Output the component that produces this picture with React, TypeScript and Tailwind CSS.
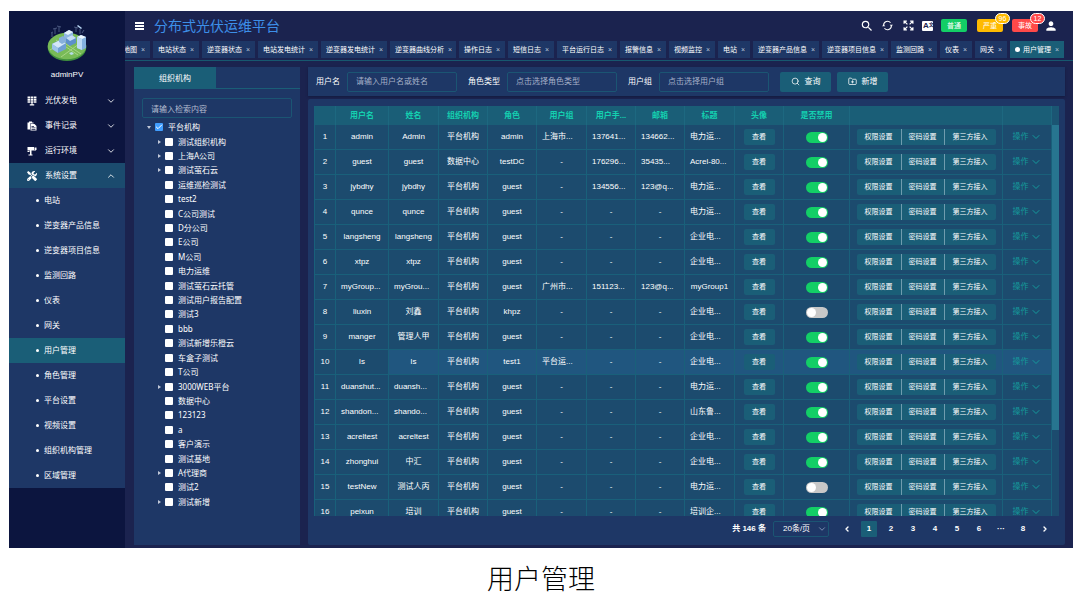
import { Check, ChevronDown, ChevronLeft, ChevronRight, ChevronUp, FolderPlus, Search } from "lucide-react";
import { MdPerson, MdSearch } from "react-icons/md";
import { FaTools } from "react-icons/fa";

const tabs = [
  "地图",
  "电站状态",
  "逆变器状态",
  "电站发电统计",
  "逆变器发电统计",
  "逆变器曲线分析",
  "操作日志",
  "短信日志",
  "平台运行日志",
  "报警信息",
  "视频监控",
  "电站",
  "逆变器产品信息",
  "逆变器项目信息",
  "监测回路",
  "仪表",
  "网关",
  "用户管理",
];

const subMenu = [
  "电站",
  "逆变器产品信息",
  "逆变器项目信息",
  "监测回路",
  "仪表",
  "网关",
  "用户管理",
  "角色管理",
  "平台设置",
  "视频设置",
  "组织机构管理",
  "区域管理",
];

const tree = [
  { name: "测试组织机构", open: true },
  { name: "上海A公司", open: true },
  { name: "测试萤石云", open: true },
  { name: "运维巡检测试" },
  { name: "test2" },
  { name: "C公司测试" },
  { name: "D分公司" },
  { name: "E公司" },
  { name: "M公司" },
  { name: "电力运维" },
  { name: "测试萤石云托管" },
  { name: "测试用户报告配置" },
  { name: "测试3" },
  { name: "bbb" },
  { name: "测试新增乐橙云" },
  { name: "车盒子测试" },
  { name: "T公司" },
  { name: "3000WEB平台", open: true },
  { name: "数据中心" },
  { name: "123123" },
  { name: "a" },
  { name: "客户演示" },
  { name: "测试基地" },
  { name: "A代理商", open: true },
  { name: "测试2" },
  { name: "测试新增", open: true },
];

const columns = ["", "用户名", "姓名", "组织机构", "角色", "用户组", "用户手...", "邮箱", "标题", "头像", "是否禁用", "", ""];

const users = [
  ["admin", "Admin", "平台机构", "admin", "上海市...", "137641...", "134662...", "电力运..."],
  ["guest", "guest", "数据中心", "testDC", "-", "176296...", "35435...", "Acrel-80..."],
  ["jybdhy", "jybdhy", "平台机构", "guest", "-", "134556...", "123@q...", "电力运..."],
  ["qunce", "qunce", "平台机构", "guest", "-", "-", "-", "电力运..."],
  ["langsheng", "langsheng", "平台机构", "guest", "-", "-", "-", "企业电..."],
  ["xtpz", "xtpz", "平台机构", "guest", "-", "-", "-", "企业电..."],
  ["myGroup...", "myGrou...", "平台机构", "guest", "广州市...", "151123...", "123@q...", "myGroup1"],
  ["liuxin", "刘鑫", "平台机构", "khpz", "-", "-", "-", "企业电..."],
  ["manger", "管理人甲", "平台机构", "guest", "-", "-", "-", "企业电..."],
  ["ls", "ls", "平台机构", "test1", "平台运...", "-", "-", "企业电..."],
  ["duanshut...", "duansh...", "平台机构", "guest", "-", "-", "-", "电力运..."],
  ["shandon...", "shando...", "平台机构", "guest", "-", "-", "-", "山东鲁..."],
  ["acreltest", "acreltest", "平台机构", "guest", "-", "-", "-", "企业电..."],
  ["zhonghui", "中汇", "平台机构", "guest", "-", "-", "-", "企业电..."],
  ["testNew", "测试人丙", "平台机构", "guest", "-", "-", "-", "电力运..."],
  ["peixun", "培训", "平台机构", "guest", "-", "-", "-", "培训企..."],
];

const disabledUsers = ["liuxin", "testNew"];

function Logo() {
  return (
    <svg viewBox="0 0 40 38" className="h-[38px] w-10">
      <ellipse cx="20" cy="23.5" rx="19.3" ry="13.5" fill="#3f8f3d" />
      <ellipse cx="20" cy="22" rx="19.3" ry="13.2" fill="#78bb57" />
      <path d="M3 26l13-8 18 12M9 16l22 15M14 33l18-13" stroke="#a9d487" strokeWidth="1" fill="none" />
      <path d="M5 13V9M4 9l2-1M8 10V5M6 5l4-1M12 8V3M10 2l4 1M29 8V3M27 3l4 1M33 10V5M35 9l2-3" stroke="#66769b" strokeWidth="0.7" fill="none" />
      <path d="M31 1l4 3-1 1-4-3z" fill="#b9d8f5" />
      <path d="M5 20l8-4 6 3v6l-8 4-6-4z" fill="#6f9fd4" />
      <path d="M5 20l8-4 6 3-8 5z" fill="#d4e7f9" />
      <path d="M5 20l6 4v5l-6-4z" fill="#9dc4ea" />
      <path d="M17 9l5-3 4 2v5l-5 3-4-2z" fill="#8fb8e2" />
      <path d="M17 9l5-3 4 2-5 3z" fill="#e3f0fc" />
      <path d="M12 14l4-2 3 2v4l-4 2-3-2z" fill="#86b0dc" />
      <path d="M19 14l6-3 4 3v5l-6 3-4-3z" fill="#5d90cb" />
      <path d="M19 14l6-3 4 3-6 3z" fill="#c5def5" />
      <path d="M30 13l4-2 5 2v11l-4 2-5-2z" fill="#84b2e0" />
      <path d="M30 13l4-2 5 2-4 2z" fill="#edf6fe" />
      <path d="M30 13l5 2v11l-5-2z" fill="#bcdaf4" />
      <path d="M22 29l3-1 2 2-3 1z" fill="#b5dcea" />
    </svg>
  );
}

function GridIcon() {
  return (
    <svg viewBox="0 0 18 18" className="h-[10px] w-[10px]" fill="currentColor">
      <path d="M1 1h4.500v3.500H1zM6.500 1h5v3.500h-5zM12.500 1H17v3.500h-4.500zM1 5.500h4.500v3H1zM6.500 5.500h5v3h-5zM12.500 5.500H17v3h-4.500zM1 9.500h4.500V12H1zM6.500 9.500h5V12h-5zM12.500 9.500H17V12h-4.500zM8 12h2v3H8zM5 15h8v2H5z" />
    </svg>
  );
}

function RecordIcon() {
  return (
    <svg viewBox="0 0 20 20" className="h-[10px] w-[10px]" fill="currentColor">
      <path d="M1 3h3V1h6v2h3v2H6v12H1z" />
      <path fillRule="evenodd" d="M7 6h8l4 4v9H7zM9 10v1.500h5V10zM9 13v1.500h8V13zM9 16v1.500h8V16z" />
    </svg>
  );
}

function CameraIcon() {
  return (
    <svg viewBox="0 0 20 20" className="h-[10px] w-[10px]" fill="currentColor">
      <path d="M1 2h13v7H1zM15 3h4v5h-2v2h-2zM6 9h3v8H6zM3 17h8v2H3zM1 10h4v2H1z" />
    </svg>
  );
}

function RefreshIcon() {
  return (
    <svg viewBox="0 0 20 20" className="h-[11px] w-[11px]" fill="none" stroke="currentColor" strokeWidth="2">
      <path d="M3 9a7 7 0 0 1 12.500-4M17 11a7 7 0 0 1-12.500 4" />
      <path d="M14 8.500h6L17 12zM0 11.500h6L3 8z" fill="currentColor" stroke="none" />
    </svg>
  );
}

function ExpandIcon() {
  return (
    <svg viewBox="0 0 20 20" className="h-[11px] w-[11px]" fill="none" stroke="currentColor" strokeWidth="2.200">
      <path d="M2 7V2h5M2 2l6 6M13 2h5v5M18 2l-6 6M2 13v5h5M2 18l6-6M18 13v5h-5M18 18l-6-6" />
    </svg>
  );
}

function Sidebar() {
  const groups = [
    { name: "光伏发电", icon: <GridIcon /> },
    { name: "事件记录", icon: <RecordIcon /> },
    { name: "运行环境", icon: <CameraIcon /> },
  ];
  return (
    <aside className="w-[116px] shrink-0 overflow-hidden bg-[#0c153f]">
      <div className="flex h-[77px] flex-col items-center pt-[13px]">
        <Logo />
        <span className="mt-2 leading-[10px]">adminPV</span>
      </div>
      <nav>
        {groups.map((g) => (
          <button key={g.name} className="flex h-[25px] w-full items-center pr-[9px] pl-[18px]">
            <span className="flex w-[18px] items-center">{g.icon}</span>
            {g.name}
            <ChevronDown className="ml-auto h-[10px] w-[10px]" />
          </button>
        ))}
        <button className="flex h-[25px] w-full items-center bg-[#1b4b6e] pr-[9px] pl-[18px]">
          <span className="flex w-[18px] items-center">
            <FaTools className="h-[10px] w-[10px]" />
          </span>
          系统设置
          <ChevronUp className="ml-auto h-[10px] w-[10px]" />
        </button>
        <ul className="bg-[#1e3766]">
          {subMenu.map((name) => (
            <li key={name}>
              <a
                href="#"
                className={`flex h-[25px] items-center gap-[5px] pl-[27px] ${name === "用户管理" ? "bg-[#1a5e77]" : ""}`}
              >
                <i className="h-[3px] w-[3px] rounded-full bg-white" />
                {name}
              </a>
            </li>
          ))}
        </ul>
      </nav>
    </aside>
  );
}

function Header() {
  return (
    <header className="flex h-[29px] items-center pr-[15px] pl-[10px]">
      <button aria-label="菜单" className="flex w-[9px] flex-col gap-px">
        <i className="h-[2px] bg-white" />
        <i className="h-[2px] bg-white" />
        <i className="h-[2px] bg-white" />
      </button>
      <h1 className="ml-[10px] text-[14px] text-[#3d8fe8]">分布式光伏运维平台</h1>
      <div className="ml-auto flex items-center">
        <button aria-label="搜索" className="mr-[8px]">
          <MdSearch className="h-[14px] w-[14px]" />
        </button>
        <button aria-label="刷新" className="mr-[10px]">
          <RefreshIcon />
        </button>
        <button aria-label="全屏" className="mr-2">
          <ExpandIcon />
        </button>
        <button className="mr-2 flex h-[10px] w-[11px] items-center rounded-[1px] bg-white pl-px text-[8px] leading-none font-bold text-[#1b234f]">
          A<span className="mb-[3px] text-[5px] leading-none">文</span>
        </button>
        <button className="mr-[10px] h-[13px] w-[26px] rounded-[2px] bg-[#13ce66] text-[7px]">普通</button>
        <Alarm label="严重" count={96} tone="bg-[#ffba00]" />
        <Alarm label="事故" count={12} tone="bg-[#ff4949]" />
        <button aria-label="用户" className="-ml-[3px]">
          <MdPerson className="h-[14px] w-[14px]" />
        </button>
      </div>
    </header>
  );
}

function Alarm({ label, count, tone }: { label: string; count: number; tone: string }) {
  return (
    <button className={`relative mr-[9px] h-[13px] w-[26px] rounded-[2px] text-[7px] ${tone}`}>
      {label}
      <span
        className={`absolute -top-[6px] -right-[7px] flex h-[11px] w-[15px] items-center justify-center rounded-full border border-white text-[7px] leading-none ${tone}`}
      >
        {count}
      </span>
    </button>
  );
}

function TabBar() {
  return (
    <div className="flex h-[21px] items-start justify-end gap-[3px] overflow-hidden border-b border-[#17586f] pt-px pr-[9px] text-[7px]">
      {tabs.map((t, i) => (
        <a
          key={i}
          href="#"
          className={`flex h-[17px] shrink-0 items-center pl-[5px] whitespace-nowrap ${t.length > 6 ? "pr-1" : "pr-[5px]"} ${
            t === "用户管理" ? "bg-[#1a5e77]" : "bg-[#1e3766]"
          }`}
        >
          {t === "用户管理" && <i className="mr-[3px] h-[5px] w-[5px] rounded-full bg-white" />}
          {t}
          <span className="ml-1 w-1 text-center text-[#b9c3d6]">×</span>
        </a>
      ))}
    </div>
  );
}

function TreeBox({ name, checked }: { name: string; checked?: boolean }) {
  return (
    <label className="relative flex items-center gap-[5px]">
      <input
        type="checkbox"
        defaultChecked={checked}
        className="peer h-2 w-2 appearance-none rounded-[1px] bg-white checked:bg-[#409eff]"
      />
      <Check className="pointer-events-none absolute left-0 hidden h-2 w-2 peer-checked:block" strokeWidth={3} />
      {name}
    </label>
  );
}

function OrgTree() {
  return (
    <section className="flex w-[166px] shrink-0 flex-col bg-[#1e3766] font-['Noto_Sans','Noto_Sans_CJK_SC',sans-serif]">
      <div className="flex h-[22px] border-b border-[#1a5e77]">
        <button className="w-[82px] bg-[#1a5e77]">组织机构</button>
      </div>
      <input
        aria-label="检索"
        placeholder="请输入检索内容"
        className="mx-2 mt-[9px] h-5 rounded-[2px] border border-[#1b5573] px-2 placeholder:text-[#b4bdd0]"
      />
      <ul className="mt-[2px] mb-9 flex min-h-0 flex-1 flex-col overflow-hidden">
        <li className="flex flex-1 items-center pl-[13px]">
          <span className="flex w-2">
            <i className="border-x-2 border-t-[3px] border-x-transparent border-t-[#c0c8d8]" />
          </span>
          <TreeBox name="平台机构" checked />
        </li>
        {tree.map((n) => (
          <li key={n.name} className="flex flex-1 items-center pl-6">
            <span className="flex w-[7px]">
              {n.open && <i className="border-y-2 border-l-[3px] border-y-transparent border-l-[#c0c8d8]" />}
            </span>
            <TreeBox name={n.name} />
          </li>
        ))}
      </ul>
    </section>
  );
}

function Field({ label, hint }: { label: string; hint: string }) {
  return (
    <label className="mr-[11px] flex items-center gap-[7px]">
      {label}
      <input
        placeholder={hint}
        className="h-5 w-[110px] rounded-[2px] border border-[#1b5573] px-2 placeholder:text-[#a5b0c8]"
      />
    </label>
  );
}

function FilterBar() {
  return (
    <form className="flex h-[29px] items-center bg-[#1e3766] pl-2 shadow-[0_1px_2px_#141b40]">
      <Field label="用户名" hint="请输入用户名或姓名" />
      <Field label="角色类型" hint="点击选择角色类型" />
      <Field label="用户组" hint="点击选择用户组" />
      <button type="button" className="flex h-5 w-[51px] items-center justify-center gap-[5px] rounded-[2px] bg-[#1a5e77]">
        <Search className="h-[9px] w-[9px]" />
        查询
      </button>
      <button type="button" className="ml-[6px] flex h-5 w-[51px] items-center justify-center gap-[5px] rounded-[2px] bg-[#1a5e77]">
        <FolderPlus className="h-[9px] w-[9px]" />
        新增
      </button>
    </form>
  );
}

function UserRow({ row, index }: { row: string[]; index: number }) {
  const active = row[0] === "ls";
  const hover = active ? "bg-[#20567f]" : "";
  const cell = "border-r border-b border-[#19607a] p-0 text-center whitespace-nowrap";
  return (
    <tr className="h-[25px] bg-[#1c4b6e]">
      <td className={cell}>{index + 1}</td>
      {row.map((v, i) => (
        <td key={i} className={`${cell} ${i > 0 ? hover : ""}`}>
          <div className={v.endsWith("...") ? "pl-[5px] text-left" : ""}>{v}</div>
        </td>
      ))}
      <td className={`${cell} ${hover}`}>
        <button className="mx-auto block h-4 w-[31px] rounded-[2px] bg-[#1a5e77] text-[7px]">查看</button>
      </td>
      <td className={`${cell} ${hover}`}>
        <input
          type="checkbox"
          role="switch"
          aria-label={`是否禁用 ${row[0]}`}
          defaultChecked={!disabledUsers.includes(row[0])}
          className="mx-auto flex h-[11px] w-[22px] appearance-none items-center rounded-full bg-[#c8c8c8] px-px before:block before:h-[9px] before:w-[9px] before:rounded-full before:bg-white checked:bg-[#13ce66] checked:before:ml-[11px]"
        />
      </td>
      <td className={`${cell} ${hover}`}>
        <div className="flex justify-center text-[7px]">
          <button className="h-4 rounded-l-[2px] bg-[#1a5e77] px-2">权限设置</button>
          <button className="h-4 border-x border-[#6f9cae] bg-[#1a5e77] px-[7px]">密码设置</button>
          <button className="h-4 rounded-r-[2px] bg-[#1a5e77] px-2">第三方接入</button>
        </div>
      </td>
      <td className={`${cell} ${hover}`}>
        <button className="mx-auto flex items-center gap-px text-[#159a9c]">
          操作
          <ChevronDown className="h-3 w-3" strokeWidth={2} />
        </button>
      </td>
    </tr>
  );
}

function UserTable() {
  return (
    <div className="flex min-h-0 flex-1">
      <div className="min-w-0 flex-1 overflow-hidden border-l border-[#19607a]">
        <table className="w-full table-fixed border-separate border-spacing-0">
          <colgroup>
            <col className="w-[21px]" />
            <col className="w-[53px]" />
            <col className="w-[50px]" />
            <col className="w-[49px]" />
            <col className="w-[49px]" />
            <col className="w-[50px]" />
            <col className="w-[49px]" />
            <col className="w-[49px]" />
            <col className="w-[50px]" />
            <col className="w-[49px]" />
            <col className="w-[66px]" />
            <col className="w-[153px]" />
            <col className="w-[49px]" />
          </colgroup>
          <thead>
            <tr className="h-[19px] bg-[#1a5e77] text-[#14d0b0]">
              {columns.map((c, i) => (
                <th key={i} className="border-r border-[#1d6880] p-0 font-bold whitespace-nowrap">
                  {c}
                </th>
              ))}
            </tr>
          </thead>
          <tbody>
            {users.map((u, i) => (
              <UserRow key={i} row={u} index={i} />
            ))}
          </tbody>
        </table>
      </div>
      <div className="flex w-[7px] flex-col bg-[#1c4b6e]">
        <div className="h-[19px] bg-[#1b5573]" />
        <div className="flex-1">
          <div className="h-[78%] bg-[#277590]" />
        </div>
      </div>
    </div>
  );
}

function Pagination() {
  const pages = ["1", "2", "3", "4", "5", "6", "···", "8"];
  return (
    <div className="mt-[5px] flex h-4 items-center justify-end pr-[6px] font-bold">
      <span>共 146 条</span>
      <div className="relative mr-[10px] ml-[7px]">
        <select
          aria-label="每页条数"
          className="block h-4 w-14 appearance-none rounded-[2px] border border-[#1b5573] pl-[9px] font-normal"
        >
          <option>20条/页</option>
        </select>
        <ChevronDown className="pointer-events-none absolute top-[3px] right-[2px] h-[10px] w-[10px] text-[#8fa0bf]" />
      </div>
      <div className="flex gap-[6px]">
        <button aria-label="上一页" className="flex h-4 w-4 items-center justify-center">
          <ChevronLeft className="h-2 w-2" strokeWidth={4} />
        </button>
        {pages.map((p) => (
          <button key={p} className={`h-4 w-4 rounded-[1px] ${p === "1" ? "bg-[#1a5e77]" : ""}`}>
            {p}
          </button>
        ))}
        <button aria-label="下一页" className="flex h-4 w-4 items-center justify-center">
          <ChevronRight className="h-2 w-2" strokeWidth={4} />
        </button>
      </div>
    </div>
  );
}

export default function App() {
  return (
    <div className="bg-white pt-[11px] pr-[15px] pl-[9px] font-['Liberation_Sans','Noto_Sans_CJK_SC',sans-serif]">
      <div className="flex h-[calc(100vh-64px)] text-[8px] leading-[12px] text-white">
        <Sidebar />
        <div className="flex min-w-0 flex-1 flex-col bg-[#1b234f]">
          <Header />
          <TabBar />
          <main className="flex min-h-0 flex-1 gap-2 pt-[6px] pr-2 pb-[3px] pl-[9px]">
            <OrgTree />
            <div className="flex min-w-0 flex-1 flex-col gap-[3px]">
              <FilterBar />
              <section className="flex min-h-0 flex-1 flex-col rounded-[2px] bg-[#1e3766] px-[6px] pt-[7px] pb-2">
                <UserTable />
                <Pagination />
              </section>
            </div>
          </main>
        </div>
      </div>
      <p className="mt-3 text-center text-[27px] leading-10 font-light text-black">用户管理</p>
    </div>
  );
}
